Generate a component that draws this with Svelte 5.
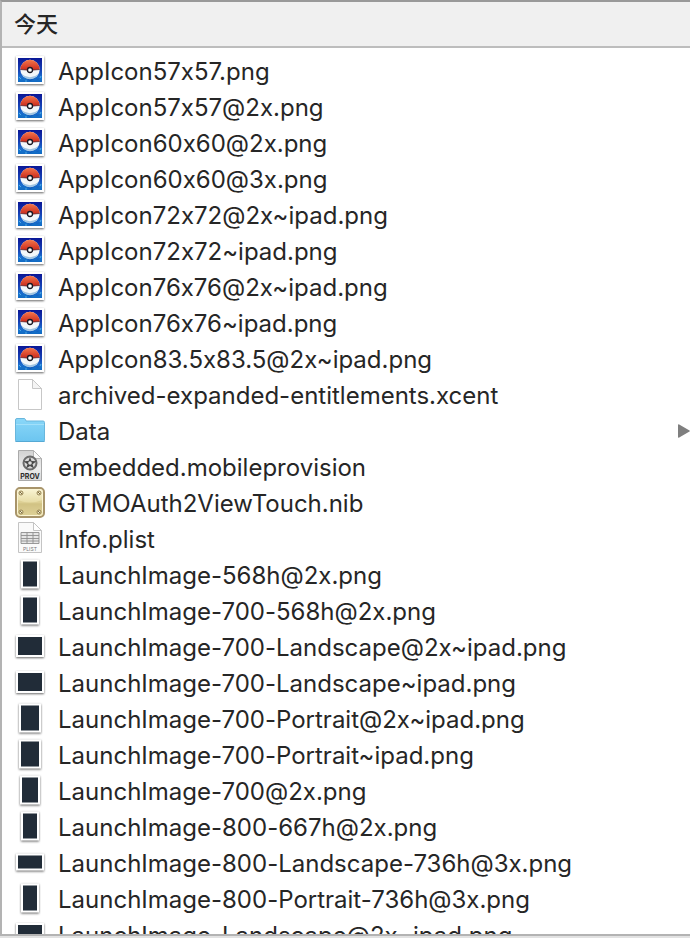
<script>
  const files = [
    { name: 'AppIcon57x57.png', kind: 'app' },
    { name: 'AppIcon57x57@2x.png', kind: 'app' },
    { name: 'AppIcon60x60@2x.png', kind: 'app' },
    { name: 'AppIcon60x60@3x.png', kind: 'app' },
    { name: 'AppIcon72x72@2x~ipad.png', kind: 'app' },
    { name: 'AppIcon72x72~ipad.png', kind: 'app' },
    { name: 'AppIcon76x76@2x~ipad.png', kind: 'app' },
    { name: 'AppIcon76x76~ipad.png', kind: 'app' },
    { name: 'AppIcon83.5x83.5@2x~ipad.png', kind: 'app' },
    { name: 'archived-expanded-entitlements.xcent', kind: 'blank' },
    { name: 'Data', kind: 'folder' },
    { name: 'embedded.mobileprovision', kind: 'prov' },
    { name: 'GTMOAuth2ViewTouch.nib', kind: 'nib' },
    { name: 'Info.plist', kind: 'plist' },
    { name: 'LaunchImage-568h@2x.png', kind: 'image', w: 14, h: 25 },
    { name: 'LaunchImage-700-568h@2x.png', kind: 'image', w: 14, h: 25 },
    { name: 'LaunchImage-700-Landscape@2x~ipad.png', kind: 'image', w: 24, h: 18 },
    { name: 'LaunchImage-700-Landscape~ipad.png', kind: 'image', w: 24, h: 18 },
    { name: 'LaunchImage-700-Portrait@2x~ipad.png', kind: 'image', w: 18, h: 25 },
    { name: 'LaunchImage-700-Portrait~ipad.png', kind: 'image', w: 18, h: 25 },
    { name: 'LaunchImage-700@2x.png', kind: 'image', w: 16, h: 25 },
    { name: 'LaunchImage-800-667h@2x.png', kind: 'image', w: 14, h: 25 },
    { name: 'LaunchImage-800-Landscape-736h@3x.png', kind: 'image', w: 24, h: 13 },
    { name: 'LaunchImage-800-Portrait-736h@3x.png', kind: 'image', w: 14, h: 25 },
    { name: 'LaunchImage-Landscape@2x~ipad.png', kind: 'image', w: 24, h: 18 },
  ];
</script>

{#snippet frame(w, h)}
  <rect class="shadow" x={16 - w / 2 - 2} y={17 - h / 2 - 2} width={w + 4} height={h + 4} fill="#fff" />
{/snippet}

<svg class="defs" width="0" height="0" aria-hidden="true">
  <defs>
    <linearGradient id="sky" x2="0" y2="1">
      <stop offset="0" stop-color="#0a1796" />
      <stop offset=".5" stop-color="#1540b4" />
      <stop offset=".8" stop-color="#1b70d0" />
      <stop offset="1" stop-color="#0d50ae" />
    </linearGradient>
    <linearGradient id="red" x2="0" y2="1">
      <stop offset="0" stop-color="#f4774a" />
      <stop offset="1" stop-color="#c9281c" />
    </linearGradient>
    <linearGradient id="blue" x2="0" y2="1">
      <stop offset="0" stop-color="#8ad7f8" />
      <stop offset="1" stop-color="#6cc5f0" />
    </linearGradient>
    <linearGradient id="paper" x2="0" y2="1">
      <stop offset="0" stop-color="#d2d2d2" />
      <stop offset=".6" stop-color="#ececec" />
      <stop offset="1" stop-color="#d8d8d8" />
    </linearGradient>
    <linearGradient id="gold" x2="0" y2="1">
      <stop offset="0" stop-color="#fbf7d8" />
      <stop offset=".5" stop-color="#e6dba4" />
      <stop offset=".55" stop-color="#d6c88c" />
      <stop offset="1" stop-color="#ece1ac" />
    </linearGradient>
  </defs>
</svg>

<main>
  <h1>今天</h1>
  <ul>
    {#each files as file}
      <li>
        <svg class="icon" viewBox="0 0 32 36" aria-hidden="true">
          {#if file.kind === 'app'}
            {@render frame(24, 24)}
            <path fill="url(#sky)" d="M4 5h24v24H4z" />
            <path d="M4 24l4 2 3-1 5 3 5-2 3 1 4-4v6H4z" fill="#167bd0" opacity=".6" />
            <path d="M5 24l2 2M26 25l1-2M11 28h2" stroke="#6cc4f2" stroke-width=".7" />
            <circle cx="16" cy="16.500" r="9.700" fill="#f3f7fa" />
            <path d="M6.300 16.500a9.700 9.700 0 0 1 19.400 0q-9.700 1.500-19.400 0z" fill="url(#red)" />
            <path d="M6.300 16.500q9.700 1.500 19.400 0" fill="none" stroke="#5d2b33" stroke-width=".8" />
            <path d="M7.500 21q3.500 3 8.500 3.200q5-.2 8.500-3.200a9.700 9.700 0 0 1-17 0z" fill="#9fc3e2" />
            <circle cx="16" cy="17" r="2.500" fill="#fff" stroke="#171723" stroke-width="1.300" />
          {:else if file.kind === 'image'}
            {@render frame(file.w, file.h)}
            <rect x={16 - file.w / 2} y={17 - file.h / 2} width={file.w} height={file.h} fill="#212c38" />
          {:else if file.kind === 'blank'}
            <path d="M4.500 2.500h14l9 9v21h-23z" fill="#fff" stroke="#c7c7c7" stroke-linejoin="round" />
            <path d="M18.500 2.500v9h9z" fill="#f4f4f4" stroke="#c7c7c7" stroke-linejoin="round" />
          {:else if file.kind === 'folder'}
            <path d="M1.500 7q0-1.500 1.500-1.500h7q1 0 1.500 1l.5 1.500h17q1.500 0 1.500 1.500v18q0 1-1 1h-27q-1 0-1-1z" fill="url(#blue)" stroke="#69b6dc" />
            <path d="M2 11.500h28" stroke="#a2e0fa" />
            <path d="M1.500 28.500h29" stroke="#55a9d4" />
          {:else if file.kind === 'prov'}
            <path d="M4.500 1.500h15l8 8v22h-23z" fill="url(#paper)" stroke="#aaa" />
            <path d="M19.500 1.500v8h8z" fill="#fafafa" stroke="#b5b5b5" />
            <circle cx="16" cy="14" r="6.500" fill="#d8d8d8" stroke="#6b6b6b" stroke-width="2" />
            <path d="M16 8l1.500 4 5 .2-4 3 1.500 4.300-4-2.500-4 2.500 1.500-4.300-4-3 5-.2z" fill="#484848" />
            <circle cx="16" cy="14" r="1.800" fill="#ddd" />
            <text x="16" y="30" font-size="7" font-weight="700" fill="#2b2b2b" text-anchor="middle">PROV</text>
          {:else if file.kind === 'nib'}
            <rect x="2" y="3" width="28" height="29" rx="4" fill="url(#gold)" stroke="#a8946a" stroke-width="2" />
            <rect x="3.500" y="4.500" width="25" height="26" rx="3" fill="none" stroke="#fbf5d4" />
            <path d="M4 15q12 5 24 0v13q0 2-2 2H6q-2 0-2-2z" fill="#c9b876" opacity=".35" />
            {#each [[7, 8], [25, 8], [7, 27], [25, 27]] as [x, y]}
              <circle cx={x} cy={y} r="2" fill="#f5efcb" stroke="#94814f" />
              <path d="M{x - 1} {y - 1}l2 2" stroke="#7b6a40" />
            {/each}
          {:else}
            <path d="M4.500 1.500h15l8 8v22h-23z" fill="#fafafa" stroke="#c4c4c4" />
            <path d="M19.500 1.500v8h8z" fill="#fff" stroke="#c4c4c4" />
            <path d="M7 11.500h18v11H7zM7 14.500h18M7 17.500h18M7 20h18M13 11.500v11M19 11.500v11" fill="#e6e6e6" stroke="#8e8e8e" stroke-width=".9" />
            <text x="16" y="29.500" font-size="5" fill="#777" text-anchor="middle">PLIST</text>
          {/if}
        </svg>
        <span class="name">{file.name}</span>
        {#if file.kind === 'folder'}
          <svg class="arrow" viewBox="0 0 12 14" aria-hidden="true">
            <path d="M0 1q0-1.200 1.200-.6l10.300 6q.8.600 0 1.200l-10.300 6q-1.200.6-1.200-.6z" fill="#7f7f7f" />
          </svg>
        {/if}
      </li>
    {/each}
  </ul>
</main>

<style>
  :global(body) {
    margin: 0;
    background: #e2e2e2;
  }

  .defs {
    position: absolute;
  }

  main {
    box-sizing: border-box;
    height: calc(100vh - 2px);
    display: flex;
    flex-direction: column;
    border: 2px solid #b3b3b3;
    border-top-color: #999;
    border-right: 0;
    background: #fff;
    color: #262626;
    font-family: Inter, 'Noto Sans CJK SC', sans-serif;
  }

  h1 {
    flex: none;
    margin: 0;
    padding: 0 12px;
    border-bottom: 2px solid #bdbdbd;
    background: #f0f0f0;
    font-size: 22px;
    font-weight: 500;
    line-height: 44px;
  }

  ul {
    flex: 1;
    min-height: 0;
    margin: 0;
    padding: 5px 0 0 12px;
    overflow: hidden;
    list-style: none;
  }

  li {
    display: flex;
    align-items: center;
    gap: 12px;
    height: 36px;
  }

  .icon {
    flex: none;
    width: 32px;
    height: 36px;
  }

  .shadow {
    filter: drop-shadow(0 1px 1px rgb(0 0 0 / 0.6));
  }

  .name {
    flex: 1;
    min-width: 0;
    padding-top: 2px;
    font-size: 24px;
    font-variant-ligatures: no-contextual;
    line-height: 36px;
    white-space: nowrap;
  }

  .arrow {
    flex: none;
    width: 12px;
    height: 14px;
  }
</style>
